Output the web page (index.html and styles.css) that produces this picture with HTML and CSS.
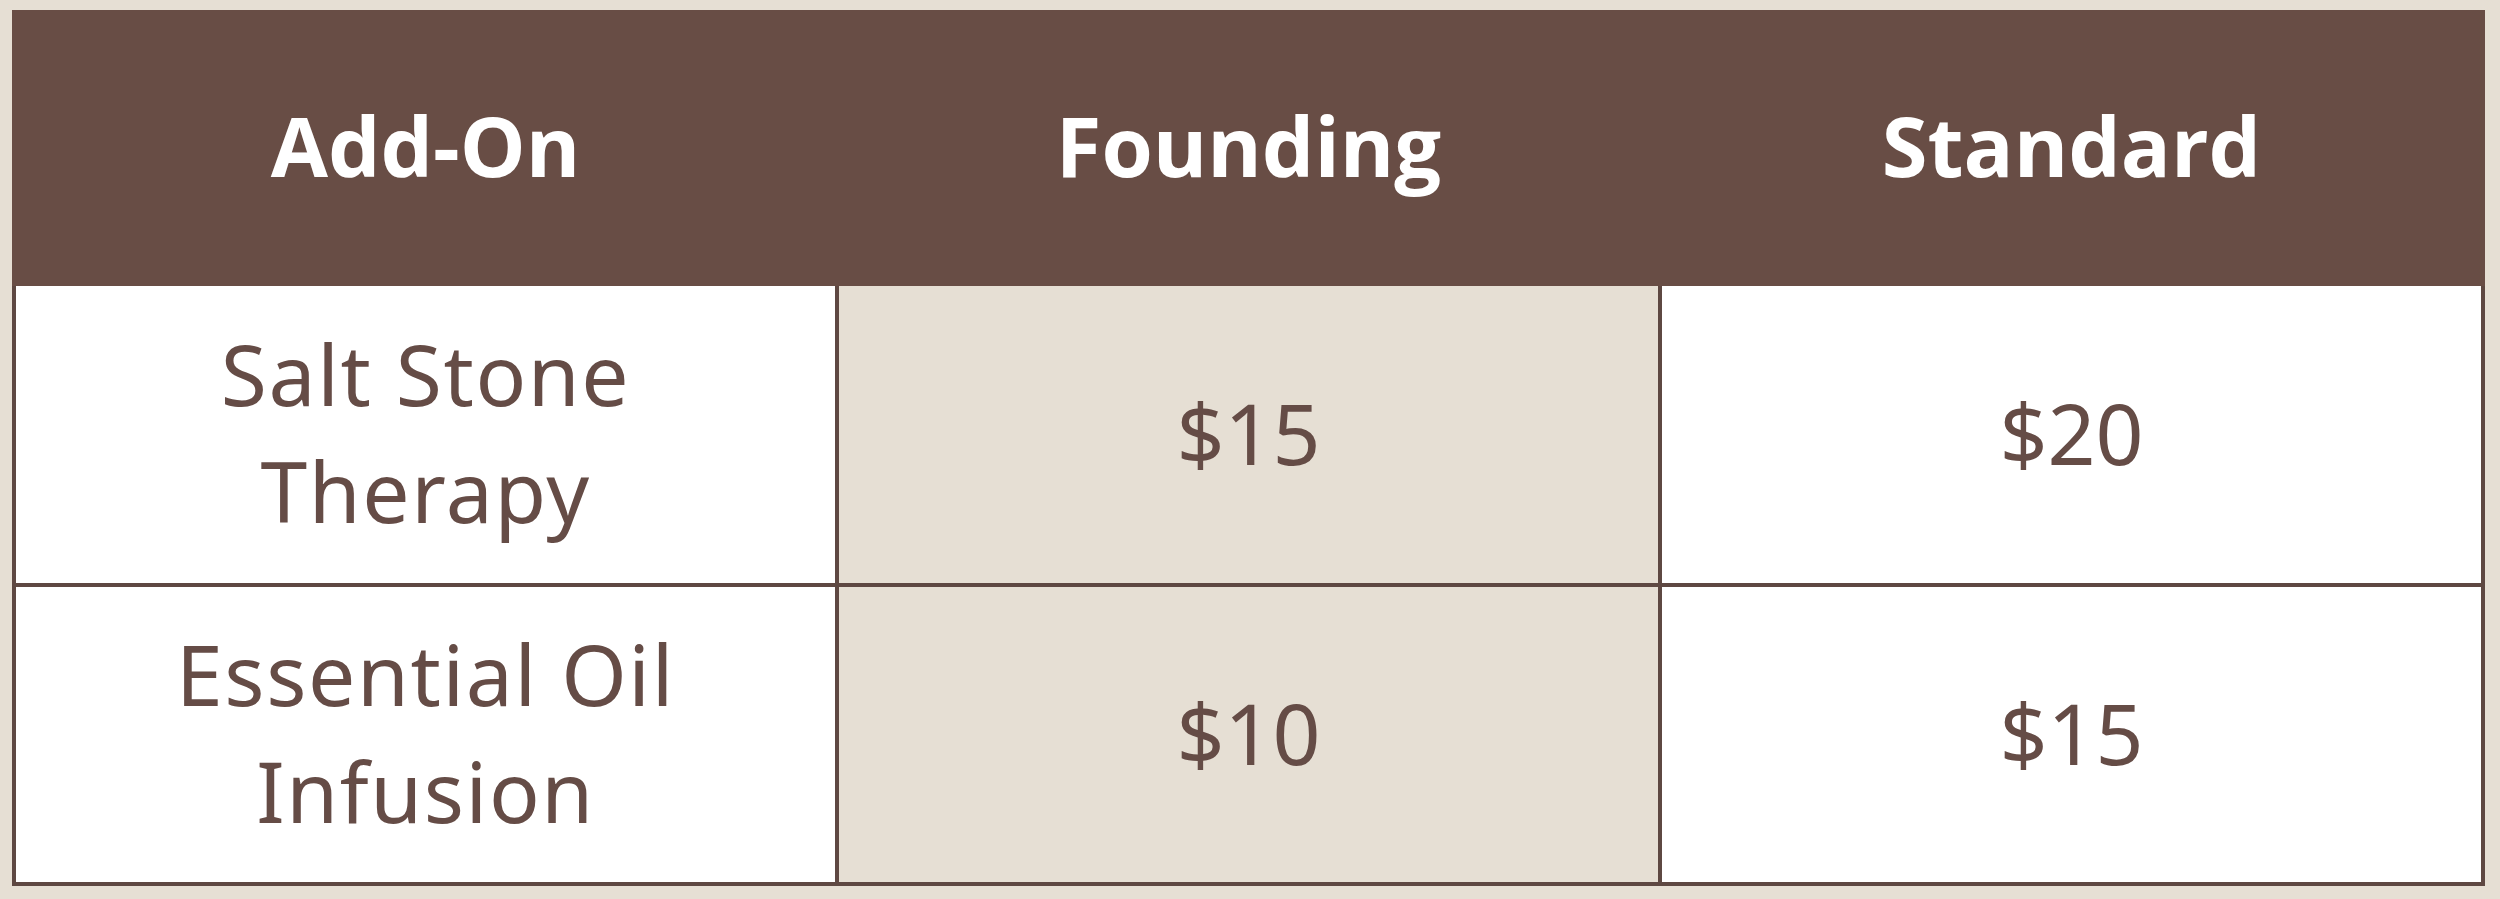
FILE: index.html
```html
<!DOCTYPE html>
<html lang="en">
<head>
<meta charset="utf-8">
<title>Add-On Pricing</title>
<link rel="stylesheet" href="styles.css">
</head>
<body>
<div class="table">
  <div class="head">
    <div class="hcell">Add-On</div>
    <div class="hcell">Founding</div>
    <div class="hcell">Standard</div>
  </div>
  <div class="body">
    <div class="cell name">Salt Stone<br>Therapy</div>
    <div class="cell alt">$15</div>
    <div class="cell">$20</div>
    <div class="cell name">Essential Oil<br>Infusion</div>
    <div class="cell alt">$10</div>
    <div class="cell">$15</div>
  </div>
</div>
</body>
</html>
```
FILE: styles.css
```css
html, body {
  margin: 0;
  padding: 0;
}
body {
  background: #e6dfd4;
  padding: 10px 0 0 12px;
  width: 2500px;
  height: 899px;
  box-sizing: border-box;
}
.table {
  width: 2473px;
  display: flex;
  flex-direction: column;
}
.head {
  display: grid;
  grid-template-columns: repeat(3, 819px);
  column-gap: 4px;
  padding: 0 4px;
  height: 276px;
  background: #684d45;
}
.hcell {
  display: flex;
  align-items: center;
  justify-content: center;
  color: #ffffff;
  font-family: "Open Sans", "Noto Sans", sans-serif;
  font-weight: 700;
  font-size: 83px;
  line-height: 1;
  padding-bottom: 7px;
}
.body {
  display: grid;
  grid-template-columns: repeat(3, 819px);
  grid-template-rows: 297px 295px;
  gap: 4px;
  padding: 0 4px 4px 4px;
  background: #5e4842;
}
.cell {
  background: #ffffff;
  display: flex;
  align-items: center;
  justify-content: center;
  text-align: center;
  color: #654c46;
  font-family: "Noto Sans", "Open Sans", sans-serif;
  font-weight: 400;
  font-size: 84px;
  line-height: 117px;
  padding-bottom: 5px;
}
.cell.name {
  letter-spacing: 1.6px;
}
.cell.alt {
  background: #e6dfd4;
}
```
